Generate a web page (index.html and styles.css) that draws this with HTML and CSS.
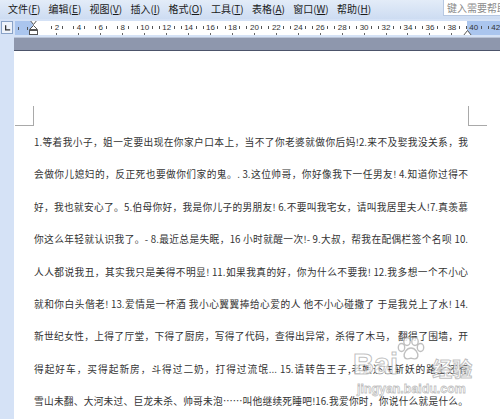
FILE: index.html
```html
<!DOCTYPE html>
<html lang="zh-CN">
<head>
<meta charset="utf-8">
<title>Word</title>
<link rel="stylesheet" href="styles.css">
</head>
<body>
<div class="menubar">
  <div class="menus">
    <span class="menu">文件(<u>F</u>)</span>
    <span class="menu">编辑(<u>E</u>)</span>
    <span class="menu">视图(<u>V</u>)</span>
    <span class="menu">插入(<u>I</u>)</span>
    <span class="menu">格式(<u>O</u>)</span>
    <span class="menu">工具(<u>T</u>)</span>
    <span class="menu">表格(<u>A</u>)</span>
    <span class="menu">窗口(<u>W</u>)</span>
    <span class="menu">帮助(<u>H</u>)</span>
  </div>
  <div class="help">键入需要帮助</div>
</div>
<div class="work">
  <div class="side">
    <div class="tabsel"><svg width="11" height="11" viewBox="0 0 11 11"><path d="M4 3V8H9" fill="none" stroke="#333" stroke-width="1.4"/></svg></div>
  </div>
  <div class="right">
    <div class="rulerbar">
      <div class="ruler">
        <div class="lead"><i class="tk"></i><i class="tk"></i></div>
        <div class="cell"><div class="row"><i class="tk"></i><span>2</span><i class="tk"></i></div><i class="bt"></i></div>
        <div class="cell"><div class="row"><i class="tk"></i><span>4</span><i class="tk"></i></div><i class="bt"></i></div>
        <div class="cell"><div class="row"><i class="tk"></i><span>6</span><i class="tk"></i></div><i class="bt"></i></div>
        <div class="cell"><div class="row"><i class="tk"></i><span>8</span><i class="tk"></i></div><i class="bt"></i></div>
        <div class="cell"><div class="row"><i class="tk"></i><span>10</span><i class="tk"></i></div><i class="bt"></i></div>
        <div class="cell"><div class="row"><i class="tk"></i><span>12</span><i class="tk"></i></div><i class="bt"></i></div>
        <div class="cell"><div class="row"><i class="tk"></i><span>14</span><i class="tk"></i></div><i class="bt"></i></div>
        <div class="cell"><div class="row"><i class="tk"></i><span>16</span><i class="tk"></i></div><i class="bt"></i></div>
        <div class="cell"><div class="row"><i class="tk"></i><span>18</span><i class="tk"></i></div><i class="bt"></i></div>
        <div class="cell"><div class="row"><i class="tk"></i><span>20</span><i class="tk"></i></div><i class="bt"></i></div>
        <div class="cell"><div class="row"><i class="tk"></i><span>22</span><i class="tk"></i></div><i class="bt"></i></div>
        <div class="cell"><div class="row"><i class="tk"></i><span>24</span><i class="tk"></i></div><i class="bt"></i></div>
        <div class="cell"><div class="row"><i class="tk"></i><span>26</span><i class="tk"></i></div><i class="bt"></i></div>
        <div class="cell"><div class="row"><i class="tk"></i><span>28</span><i class="tk"></i></div><i class="bt"></i></div>
        <div class="cell"><div class="row"><i class="tk"></i><span>30</span><i class="tk"></i></div><i class="bt"></i></div>
        <div class="cell"><div class="row"><i class="tk"></i><span>32</span><i class="tk"></i></div><i class="bt"></i></div>
        <div class="cell"><div class="row"><i class="tk"></i><span>34</span><i class="tk"></i></div><i class="bt"></i></div>
        <div class="cell"><div class="row"><i class="tk"></i><span>36</span><i class="tk"></i></div><i class="bt"></i></div>
        <div class="cell"><div class="row"><i class="tk"></i><span>38</span><i class="tk"></i></div><i class="bt"></i></div>
        <div class="cell"><div class="row"><i class="tk"></i><span>40</span><i class="tk"></i></div></div>
        <div class="cell"><div class="row"><i class="tk"></i><span>42</span><i class="tk"></i></div></div>
        <svg class="indent" width="9" height="17" viewBox="0 0 9 17"><path d="M0.5 0.5H8.5L4.5 5.5Z M4.5 6.5L8.5 10.5H0.5Z" fill="#fff" stroke="#555"/><rect x="0.5" y="11.5" width="8" height="4" fill="#fff" stroke="#555"/></svg>
        <svg class="rindent" width="9" height="6" viewBox="0 0 9 6"><path d="M4.5 0.5L8.5 5.5H0.5Z" fill="#fff" stroke="#555"/></svg>
      </div>
    </div>
    <div class="band"></div>
    <div class="page">
      <div class="corners"><span class="c l"></span><span class="c r"></span></div>
      <div class="text">
        <p>1.等着我小子，姐一定要出现在你家户口本上，当不了你老婆就做你后妈!2.来不及娶我没关系，我</p>
        <p>会做你儿媳妇的，反正死也要做你们家的鬼。. 3.这位帅哥，你好像我下一任男友! 4.知道你过得不</p>
        <p>好，我也就安心了。5.伯母你好，我是你儿子的男朋友! 6.不要叫我宅女，请叫我居里夫人!7.真羡慕</p>
        <p>你这么年轻就认识我了。- 8.最近总是失眠，16 小时就醒一次!- 9.大叔，帮我在配偶栏签个名呗 10.</p>
        <p>人人都说我丑，其实我只是美得不明显! 11.如果我真的好，你为什么不要我! 12.我多想一个不小心</p>
        <p>就和你白头偕老! 13.爱情是一杯酒 我小心翼翼捧给心爱的人 他不小心碰撒了 于是我兑上了水! 14.</p>
        <p>新世纪女性，上得了厅堂，下得了厨房，写得了代码，查得出异常，杀得了木马， 翻得了围墙，开</p>
        <p>得起好车，买得起新房，斗得过二奶，打得过流氓... 15.请转告王子,老娘还在斩妖的路上还有</p>
        <p>雪山未翻、大河未过、巨龙未杀、帅哥未泡……叫他继续死睡吧!16.我爱你时，你说什么就是什么。</p>
      </div>
      <div class="wm">
        <div class="wm-top">
          <span class="bai">Bai</span>
          <svg class="paw" width="28" height="24" viewBox="0 0 28 24"><g fill="rgba(255,255,255,0.8)" stroke="rgba(150,150,150,0.6)" stroke-width="1.4"><ellipse cx="4.5" cy="10.5" rx="3.2" ry="4"/><ellipse cx="10" cy="4.5" rx="3.2" ry="4"/><ellipse cx="18" cy="4.5" rx="3.2" ry="4"/><ellipse cx="23.5" cy="10.5" rx="3.2" ry="4"/><path d="M14 11C9.5 11 6.5 16.5 7.2 19.5C8 22.8 11.7 22 14 21.2C16.3 22 20 22.8 20.8 19.5C21.5 16.5 18.5 11 14 11Z"/></g></svg>
          <span class="jy">经验</span>
        </div>
        <div class="url">jingyan.baidu.com</div>
      </div>
    </div>
  </div>
</div>
</body>
</html>
```
FILE: styles.css
```css
html, body {
  margin: 0;
  padding: 0;
}
body {
  width: 500px;
  height: 419px;
  overflow: hidden;
  background: #fff;
  font-family: "Noto Sans CJK SC", "Noto Sans", sans-serif;
}
.menubar {
  height: 19px;
  display: flex;
  justify-content: space-between;
  background: linear-gradient(#e3ecf8, #cddcf2);
}
.menus {
  display: flex;
  gap: 8.3px;
  padding-left: 8px;
  font-size: 10px;
  line-height: 18px;
  color: #1a1a1a;
  white-space: nowrap;
}
.menu u {
  text-underline-offset: 1px;
}
.help {
  width: 57px;
  height: 16px;
  background: #fff;
  border-left: 1px solid #b7c8e2;
  border-bottom: 1px solid #b7c8e2;
  box-sizing: border-box;
  font-size: 10px;
  line-height: 15px;
  color: #8a8a8a;
  padding-left: 3px;
  white-space: nowrap;
  overflow: hidden;
}
.work {
  display: flex;
  height: 400px;
}
.side {
  width: 14px;
  flex: none;
  background: #d5e2f6;
  padding-top: 2px;
  box-sizing: border-box;
}
.tabsel {
  width: 12px;
  height: 13px;
  margin-left: 1px;
  border: 1px solid #8aa3c8;
  box-sizing: border-box;
  background: #eef3fb;
  display: flex;
  align-items: center;
  justify-content: center;
}
.tabsel svg {
  display: block;
}
.right {
  flex: 1;
  display: flex;
  flex-direction: column;
  min-width: 0;
}
.rulerbar {
  height: 18px;
  background: #d5e2f6;
  padding-top: 2px;
  box-sizing: border-box;
}
.ruler {
  position: relative;
  margin-left: 1px;
  height: 14px;
  display: flex;
  overflow: hidden;
  background: linear-gradient(to right, #aac5ee 0 18px, #fff 18px 452px, #aac5ee 452px);
  font-family: "Liberation Sans", Arial, sans-serif;
  font-size: 8px;
  color: #333;
}
.lead {
  width: 31px;
  flex: none;
  display: flex;
  align-items: center;
  gap: 8px;
  padding-left: 3px;
  box-sizing: border-box;
}
.cell {
  width: 21.94px;
  flex: none;
  display: flex;
  flex-direction: column;
  align-items: center;
}
.row {
  height: 12px;
  display: flex;
  align-items: center;
  gap: 2.5px;
}
.tk {
  display: block;
  width: 1px;
  height: 3px;
  background: #555;
}
.bt {
  display: block;
  width: 1px;
  height: 2px;
  background: #666;
}
.indent {
  position: absolute;
  left: 14px;
  top: -2px;
}
.rindent {
  position: absolute;
  left: 448px;
  top: 9px;
}
.band {
  height: 14px;
  flex: none;
  background: #8e97ad;
  border-top: 1px solid #b9c3d6;
  border-bottom: 1px solid #4c546a;
  box-sizing: border-box;
}
.page {
  flex: 1;
  position: relative;
  background: #fff;
  padding-top: 55px;
}
.corners {
  display: flex;
  justify-content: space-between;
  padding: 0 13px 0 1px;
}
.c {
  display: block;
  width: 18px;
  height: 19px;
  border-bottom: 1px solid #a9a9a9;
}
.c.l {
  border-right: 1px solid #a9a9a9;
}
.c.r {
  border-left: 1px solid #a9a9a9;
}
.text {
  padding: 0 32px 0 20px;
  font-size: 9.7px;
  line-height: 32.4px;
  color: #333;
}
.text p {
  margin: 0;
  text-align: justify;
  text-align-last: justify;
}
.wm {
  position: absolute;
  left: 339px;
  top: 286px;
  display: flex;
  flex-direction: column;
  align-items: flex-start;
  color: rgba(255, 255, 255, 0.8);
  -webkit-text-stroke: 1px rgba(150, 150, 150, 0.6);
  font-family: "Liberation Sans", Arial, sans-serif;
  font-weight: bold;
}
.wm-top {
  display: flex;
  align-items: flex-start;
}
.bai {
  font-size: 29px;
  line-height: 28px;
  margin-top: 13px;
}
.paw {
  display: block;
  margin-left: -1px;
}
.jy {
  font-family: "Noto Sans CJK SC", sans-serif;
  font-size: 20px;
  line-height: 21px;
  margin-top: 21px;
  margin-left: 7px;
}
.url {
  font-size: 12.4px;
  line-height: 14px;
  margin-top: 3px;
  margin-left: 4px;
  -webkit-text-stroke: 0.8px rgba(150, 150, 150, 0.6);
}
```
